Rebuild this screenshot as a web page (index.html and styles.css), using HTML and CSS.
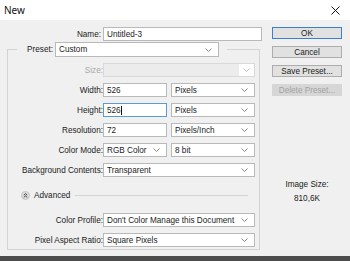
FILE: index.html
```html
<!DOCTYPE html>
<html lang="en">
  <head>
    <meta charset="UTF-8" />
    <title>New</title>
    <link rel="stylesheet" href="styles.css">
  </head>
  <body>
    <div class="titlebar">
      <span class="title">New</span>
      <svg class="close" width="9" height="9" viewBox="0 0 9 9">
        <path d="M0.5 0.5 L8.5 8.5 M8.5 0.5 L0.5 8.5" stroke="#111" stroke-width="1" fill="none" />
      </svg>
    </div>

    <div class="dialog">
      <div class="main">
        <div class="row">
          <label class="label label-name">Name:</label>
          <div class="field wide-name">Untitled-3</div>
        </div>

        <fieldset class="group">
          <legend class="preset">
            <span class="preset-label">Preset:</span>
            <div class="select preset-select">
              <span>Custom</span>
              <svg class="chev" width="7" height="4" viewBox="0 0 7 4"><path d="M0.5 0.5 L3.5 3.5 L6.5 0.5" /></svg>
            </div>
          </legend>

          <div class="row">
            <span class="label disabled-text">Size:</span>
            <div class="select full disabled">
              <span></span>
              <span class="drop"><svg class="chev" width="7" height="4" viewBox="0 0 7 4"><path d="M0.5 0.5 L3.5 3.5 L6.5 0.5" /></svg></span>
            </div>
          </div>

          <div class="row">
            <span class="label">Width:</span>
            <div class="field small">526</div>
            <div class="select unit">
              <span>Pixels</span>
              <svg class="chev" width="7" height="4" viewBox="0 0 7 4"><path d="M0.5 0.5 L3.5 3.5 L6.5 0.5" /></svg>
            </div>
          </div>

          <div class="row">
            <span class="label">Height:</span>
            <div class="field small focused">526<span class="caret"></span></div>
            <div class="select unit">
              <span>Pixels</span>
              <svg class="chev" width="7" height="4" viewBox="0 0 7 4"><path d="M0.5 0.5 L3.5 3.5 L6.5 0.5" /></svg>
            </div>
          </div>

          <div class="row">
            <span class="label">Resolution:</span>
            <div class="field small">72</div>
            <div class="select unit">
              <span>Pixels/Inch</span>
              <svg class="chev" width="7" height="4" viewBox="0 0 7 4"><path d="M0.5 0.5 L3.5 3.5 L6.5 0.5" /></svg>
            </div>
          </div>

          <div class="row">
            <span class="label">Color Mode:</span>
            <div class="select small">
              <span>RGB Color</span>
              <svg class="chev" width="7" height="4" viewBox="0 0 7 4"><path d="M0.5 0.5 L3.5 3.5 L6.5 0.5" /></svg>
            </div>
            <div class="select unit">
              <span>8 bit</span>
              <svg class="chev" width="7" height="4" viewBox="0 0 7 4"><path d="M0.5 0.5 L3.5 3.5 L6.5 0.5" /></svg>
            </div>
          </div>

          <div class="row">
            <span class="label">Background Contents:</span>
            <div class="select full">
              <span>Transparent</span>
              <svg class="chev" width="7" height="4" viewBox="0 0 7 4"><path d="M0.5 0.5 L3.5 3.5 L6.5 0.5" /></svg>
            </div>
          </div>

          <div class="advanced">
            <svg class="adv-icon" width="9" height="9" viewBox="0 0 9 9">
              <circle cx="4.5" cy="4.5" r="4" fill="#dedede" stroke="#c4c4c4" stroke-width="1" />
              <path d="M2.8 4.2 L4.5 2.6 L6.2 4.2 M2.8 6.4 L4.5 4.8 L6.2 6.4" stroke="#333" stroke-width="0.9" fill="none" />
            </svg>
            <span>Advanced</span>
            <span class="rule"></span>
          </div>

          <div class="row">
            <span class="label">Color Profile:</span>
            <div class="select full">
              <span>Don't Color Manage this Document</span>
              <svg class="chev" width="7" height="4" viewBox="0 0 7 4"><path d="M0.5 0.5 L3.5 3.5 L6.5 0.5" /></svg>
            </div>
          </div>

          <div class="row">
            <span class="label">Pixel Aspect Ratio:</span>
            <div class="select full">
              <span>Square Pixels</span>
              <svg class="chev" width="7" height="4" viewBox="0 0 7 4"><path d="M0.5 0.5 L3.5 3.5 L6.5 0.5" /></svg>
            </div>
          </div>
        </fieldset>
      </div>

      <div class="side">
        <div class="button default">OK</div>
        <div class="button">Cancel</div>
        <div class="button">Save Preset...</div>
        <div class="button off">Delete Preset...</div>

        <div class="image-size">
          <div>Image Size:</div>
          <div class="size-value">810,6K</div>
        </div>
      </div>
    </div>

    <div class="taskbar"></div>
  </body>
</html>
```

FILE: styles.css
```css
* {
  margin: 0;
  padding: 0;
  box-sizing: border-box;
}

html,
body {
  width: 350px;
  height: 261px;
  overflow: hidden;
}

body {
  background-color: #f0f0f0;
  font-family: "Liberation Sans", Arial, sans-serif;
  font-size: 8.2px;
  color: #1b1b1b;
  display: flex;
  flex-direction: column;
}

.titlebar {
  height: 20px;
  background-color: #fff;
  display: flex;
  align-items: center;
  justify-content: space-between;
  padding: 0 10px 0 4px;
  font-family: "Noto Sans", sans-serif;
  font-size: 10px;
  color: #111;
}

.dialog {
  flex: 1;
  display: flex;
  gap: 10px;
  padding: 7px 0 0 7px;
}

.main {
  width: 255px;
}

.row {
  display: flex;
  align-items: center;
  gap: 2px;
  height: 14px;
}

.group .row {
  gap: 0;
  margin-bottom: 6px;
}

.group .row:last-child {
  margin-bottom: 2px;
}

.label {
  width: 94px;
  text-align: right;
  white-space: nowrap;
}

.group .label {
  width: 95px;
}

.disabled-text {
  color: #a8a8a8;
}

.field,
.select {
  height: 14px;
  background-color: #fff;
  border: 1px solid #b9b9b9;
  display: flex;
  align-items: center;
  padding-left: 3px;
  white-space: nowrap;
}

.wide-name {
  width: 159px;
}

.small {
  width: 64px;
}

.unit {
  width: 84px;
  margin-left: 4px;
}

.full {
  width: 152px;
}

.select {
  justify-content: space-between;
  padding-right: 6px;
}

.focused {
  border-color: #5b9bd5;
}

.caret {
  width: 1px;
  height: 9px;
  background-color: #111;
}

.chev {
  flex: none;
}

.chev path {
  stroke: #8a8a8a;
  stroke-width: 1;
  fill: none;
}

.select.disabled {
  background-color: #ececec;
  border-color: #d9d9d9;
  padding-right: 0;
}

.drop {
  width: 15px;
  height: 100%;
  background-color: #fff;
  display: flex;
  align-items: center;
  justify-content: center;
}

.drop .chev path {
  stroke: #c4c4c4;
}

.group {
  width: 253px;
  margin-top: 1px;
  border: 1px solid #d4d4d4;
  padding: 6px 3px 0 0;
}

.preset {
  display: flex;
  align-items: center;
  gap: 2px;
  margin-left: 9px;
  padding: 0 8px;
}

.preset-label {
  width: 28px;
  text-align: right;
  white-space: nowrap;
}

.preset-select {
  width: 164px;
  height: 15px;
}

.advanced {
  display: flex;
  align-items: center;
  height: 12px;
  margin: 12px 0 12px 13px;
}

.adv-icon {
  margin-right: 4px;
}

.rule {
  flex: 1;
  height: 1px;
  background-color: #d4d4d4;
  margin: 0 8px 0 5px;
}

.side {
  width: 70px;
  display: flex;
  flex-direction: column;
  gap: 7px;
}

.button {
  height: 12px;
  background-color: #e1e1e1;
  border: 1px solid #adadad;
  display: flex;
  align-items: center;
  justify-content: center;
  white-space: nowrap;
}

.button.default {
  border-color: #3c7fd1;
}

.button.off {
  background-color: #d6d6d6;
  border-color: #d6d6d6;
  color: #a3a3a3;
}

.image-size {
  margin-top: 75px;
  text-align: center;
  line-height: 14px;
}

.taskbar {
  height: 5px;
  background-color: #4c4c4c;
}
```
